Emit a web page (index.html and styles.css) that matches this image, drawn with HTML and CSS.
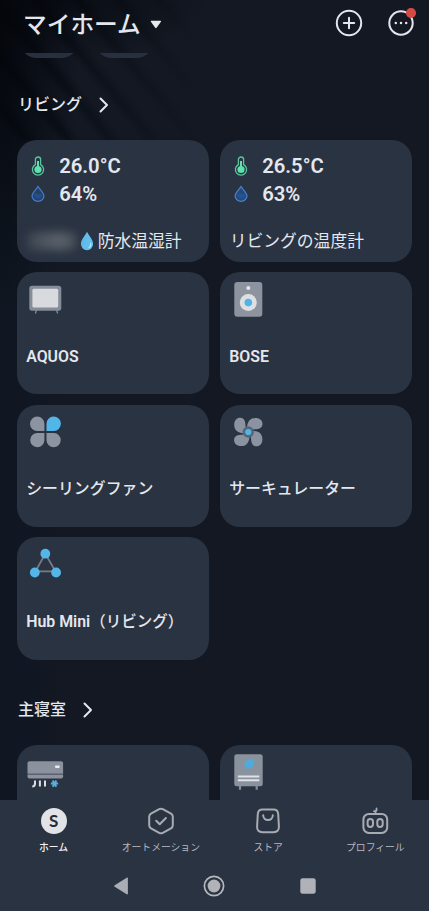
FILE: index.html
```html
<!DOCTYPE html>
<html lang="ja">
<head>
<meta charset="utf-8">
<meta name="viewport" content="width=device-width, initial-scale=1">
<title>マイホーム</title>
<link rel="stylesheet" href="styles.css">
</head>
<body>
<div class="app">
  <header class="header">
    <h1 class="title">マイホーム</h1>
    <svg class="caret" width="12" height="9" viewBox="0 0 12 9"><path d="M1.3.8h9.2q.8.1.4.9L6.6 7.8q-.7.8-1.4 0L.9 1.7Q.5.9 1.3.8z" fill="#e8eaee"/></svg>
    <div class="actions">
      <svg width="28" height="28" viewBox="0 0 28 28" fill="none" stroke="#e3e6ee" stroke-width="2" stroke-linecap="round"><circle cx="14" cy="14" r="12.2"/><path d="M14 8.8v10.4M8.8 14h10.4"/></svg>
      <div class="more">
        <svg width="28" height="28" viewBox="0 0 28 28"><circle cx="14" cy="14" r="11.7" fill="none" stroke="#e3e6ee" stroke-width="2"/><g fill="#e3e6ee"><circle cx="8.8" cy="14" r="1.25"/><circle cx="14" cy="14" r="1.25"/><circle cx="19.2" cy="14" r="1.25"/></g></svg>
        <span class="badge"></span>
      </div>
    </div>
  </header>

  <main class="content">
    <div class="chips"><span class="chip"></span><span class="chip"></span></div>

    <h2 class="section">リビング<svg width="10" height="16" viewBox="0 0 10 16"><path d="M1.5 1.5 8 8l-6.500 6.500"/></svg></h2>
    <div class="grid">
      <div class="card">
        <div class="reading">
          <svg width="14" height="20" viewBox="0 0 14 20"><path d="M4.400 8.600V3.600a2.600 2.600 0 0 1 5.200 0v5a5.600 5.600 0 1 1-5.200 0z" fill="none" stroke="#57c69d" stroke-width="1.300"/><circle cx="7" cy="13.500" r="3.600" fill="#5fe0ad"/><path d="M7 5v8" stroke="#5fe0ad" stroke-width="2"/></svg>
          <span>26.0°C</span>
        </div>
        <div class="reading">
          <svg width="14" height="18" viewBox="0 0 14 18"><path d="M7 1.500C5 4.800 1.100 7.800 1.100 11a5.900 5.400 0 0 0 11.800 0C12.900 7.800 9 4.800 7 1.500z" fill="#26405f" stroke="#4478d0" stroke-width="1.300"/><path d="M2.800 9.500q2-1.800 4-.6t4.500-.5a4.300 4.400 0 1 1-8.500 1.100z" fill="#235089"/></svg>
          <span>64%</span>
        </div>
        <div class="label sensor">
          <span class="masked"></span>
          <svg class="drop" width="14" height="20" viewBox="0 0 14 20"><path d="M7 .8C5 5 .9 8.700.9 13a6.100 6.200 0 0 0 12.200 0C13.100 8.700 9 5 7 .8z" fill="#62bfed"/><path d="M10.700 12.500q.6 2.500-1.500 4" fill="none" stroke="#bbe9fb" stroke-width="1.300" stroke-linecap="round"/></svg>
          <span>防水温湿計</span>
        </div>
      </div>
      <div class="card">
        <div class="reading">
          <svg width="14" height="20" viewBox="0 0 14 20"><path d="M4.400 8.600V3.600a2.600 2.600 0 0 1 5.200 0v5a5.600 5.600 0 1 1-5.200 0z" fill="none" stroke="#57c69d" stroke-width="1.300"/><circle cx="7" cy="13.500" r="3.600" fill="#5fe0ad"/><path d="M7 5v8" stroke="#5fe0ad" stroke-width="2"/></svg>
          <span>26.5°C</span>
        </div>
        <div class="reading">
          <svg width="14" height="18" viewBox="0 0 14 18"><path d="M7 1.500C5 4.800 1.100 7.800 1.100 11a5.900 5.400 0 0 0 11.800 0C12.900 7.800 9 4.800 7 1.500z" fill="#264a75" stroke="#4a7dc8" stroke-width="1.300"/><path d="M2.800 9q2-1.800 4-.6t4.500-.5a4.300 4.600 0 1 1-8.500 1.100z" fill="#205494"/></svg>
          <span>63%</span>
        </div>
        <div class="label sensor">リビングの温度計</div>
      </div>

      <div class="card">
        <svg class="device" viewBox="0 0 60 50"><path d="M19.500 38l-1 3M39.500 38l1 3" stroke="#858c98" stroke-width="1.300" stroke-linecap="round"/><rect x="12.300" y="13.800" width="32" height="25" rx="2.800" fill="#858d9a"/><rect x="15.400" y="16.800" width="25.800" height="18.600" rx="1.500" fill="#d8dadd"/></svg>
        <div class="label latin">AQUOS</div>
      </div>
      <div class="card">
        <svg class="device" viewBox="0 0 60 50"><rect x="14.300" y="10" width="28" height="34.700" rx="3" fill="#8d949f"/><circle cx="28.300" cy="16" r="2" fill="#e3e6ea"/><circle cx="28.300" cy="30.600" r="8.500" fill="#dedfe2"/><circle cx="28.300" cy="30.600" r="3.800" fill="#50b4e5"/></svg>
        <div class="label latin">BOSE</div>
      </div>

      <div class="card">
        <svg class="device" viewBox="0 0 60 50"><g fill="#8d94a1"><path d="M27.400 26h-7a7.200 7.200 0 1 1 7-7z"/><path d="M27.400 28v7.300a7.100 7.100 0 1 1-7-7.300z"/><path d="M29.500 28h7.400a7.100 7.100 0 1 1-7.400 7.300z"/></g><path d="M29.500 26v-7a7.200 7.200 0 1 1 7.400 7z" fill="#52b6e9"/></svg>
        <div class="label">シーリングファン</div>
      </div>
      <div class="card">
        <svg class="device" viewBox="0 0 60 50"><g fill="#8b92a0"><path id="blade" d="M27 26C26.500 16.500 30 12.900 35.500 12.900c4.500 0 7.200 2.700 7 6.300-.2 3.900-4 5-7.500 5-3 0-4.500 1.500-6 3z"/><use href="#blade" transform="rotate(90 28.300 27)"/><use href="#blade" transform="rotate(180 28.300 27)"/><use href="#blade" transform="rotate(270 28.300 27)"/></g><circle cx="28.300" cy="27" r="5.700" fill="#53667d"/><circle cx="28.300" cy="27" r="3.100" fill="#52b6e0"/></svg>
        <div class="label">サーキュレーター</div>
      </div>

      <div class="card">
        <svg class="device" viewBox="0 0 60 50"><path d="M28.300 16.700 18.500 34.300h20z" fill="none" stroke="#747c88" stroke-width="1.800"/><g fill="#54b5e8"><circle cx="28.300" cy="16.700" r="4.900"/><circle cx="17.800" cy="35.500" r="4.900"/><circle cx="39.100" cy="35.500" r="4.900"/></g></svg>
        <div class="label latin">Hub Mini<span class="room">（リビング）</span></div>
      </div>
    </div>

    <h2 class="section second">主寝室<svg width="10" height="16" viewBox="0 0 10 16"><path d="M1.500 1.500 8 8l-6.500 6.500"/></svg></h2>
    <div class="grid">
      <div class="card">
        <svg class="device" viewBox="0 0 60 50"><path d="M12.500 16.300h31.600q2 0 2 2v10.400H10.500V18.300q0-2 2-2z" fill="#8b929e"/><path d="M10.500 29.600h35.600v1.800q0 2-2 2H12.500q-2 0-2-2z" fill="#8b929e"/><rect x="38" y="20.500" width="4.700" height="2.400" rx=".8" fill="#e9ebee"/><path d="M18 35.500v3q0 3-2.700 3M22.900 35.500v6M28 35.500v6" fill="none" stroke="#dce0e6" stroke-width="2"/><path d="M35.700 35.500l3.600 6.200M39.300 35.500l-3.600 6.200M33.900 38.600h7.200" stroke="#52b0e2" stroke-width="2"/></svg>
      </div>
      <div class="card">
        <svg class="device" viewBox="0 0 60 50"><path d="M20 40v4.800M36.700 40v4.800" stroke="#858d99" stroke-width="2.200"/><rect x="14.300" y="9.300" width="28.400" height="32" rx="2.500" fill="#8a929e"/><path d="M33.800 13.500c.5 4 .2 9-4.300 10-2.300.4-4-.3-4.600-.8-1.900-4.900 1.300-8.400 8.900-9.200z" fill="#4bace0"/><path d="m25 23.500 5-5.500" stroke="#6b9dbd" stroke-width=".8"/><path d="M17.800 31.600h21.500M17.800 35.300h21.500" stroke="#dfe2e6" stroke-width="2"/></svg>
      </div>
    </div>
  </main>

  <footer class="footer">
    <nav class="tabs">
      <div class="tab active">
        <div class="home">S</div>
        <span>ホーム</span>
      </div>
      <div class="tab">
        <svg viewBox="0 0 28 28"><path d="M12.200 2.200q1.800-1 3.600 0l8.200 4.500q1.800 1 1.800 3v8.600q0 2-1.800 3l-8.200 4.500q-1.800 1-3.600 0L4 21.300q-1.800-1-1.800-3V9.700q0-2 1.800-3z"/><path d="m9.200 13.800 3.500 3.500 6.200-6.300"/></svg>
        <span>オートメーション</span>
      </div>
      <div class="tab">
        <svg viewBox="0 0 28 28"><path d="M8.500 2.500h11q4.300 0 4.700 4.300l.7 12.700q.2 5.700-5.400 5.700h-11q-5.600 0-5.400-5.700l.7-12.700q.4-4.300 4.700-4.300z"/><path d="M9.200 8.300a4.800 4.800 0 0 0 9.600 0"/></svg>
        <span>ストア</span>
      </div>
      <div class="tab">
        <svg viewBox="0 0 28 28"><rect x="2.400" y="6.900" width="23.800" height="19" rx="5.500"/><rect x="6.600" y="12" width="5.400" height="8" rx="2.700"/><rect x="16.300" y="12" width="5.400" height="8" rx="2.700"/><path d="M14.500 6V4.200H13M15.500 3.500V1.500" stroke-width="1.800"/></svg>
        <span>プロフィール</span>
      </div>
    </nav>
    <div class="system">
      <svg width="14" height="18" viewBox="0 0 14 18"><path d="M12.700.7q1.200-.5 1.200.8v15q0 1.300-1.200.8L.7 9.800Q-.4 9 .7 8.200z" fill="#aaadb3"/></svg>
      <svg width="22" height="22" viewBox="0 0 22 22"><circle cx="11" cy="11" r="9.600" fill="none" stroke="#b5b8bd" stroke-width="1.700"/><circle cx="11" cy="11" r="6.400" fill="#b0b3b8"/></svg>
      <svg width="16" height="16" viewBox="0 0 16 16"><rect x=".3" y=".3" width="15.400" height="15.400" rx="2.300" fill="#b0b2b8"/></svg>
    </div>
  </footer>
</div>
</body>
</html>
```
FILE: styles.css
```css
* { box-sizing: border-box; }

body {
  margin: 0;
  background: #141822;
  color: #e4e7ed;
  font-family: Roboto, "Noto Sans CJK JP", sans-serif;
}

svg { display: block; flex: none; }

.app {
  height: 911px;
  display: flex;
  flex-direction: column;
  overflow: hidden;
  background:
    radial-gradient(ellipse 80px 280px at 0 40px, rgba(2, 4, 8, .85), rgba(2, 4, 8, 0)),
    radial-gradient(ellipse 150px 60px at 60px 0, rgba(2, 4, 8, .6), rgba(2, 4, 8, 0)),
    linear-gradient(90deg, rgba(19, 24, 35, 0) 60px, #131823 210px) 0 0 / 300px 140px no-repeat,
    repeating-linear-gradient(50deg, rgba(3, 6, 12, 0) 0 12px, rgba(3, 6, 12, .5) 21px, rgba(3, 6, 12, 0) 32px) 0 0 / 299px 140px no-repeat,
    linear-gradient(90deg, #101722 0, #131823 70px, #141822 100%);
}

.header {
  flex: none;
  height: 52.500px;
  display: flex;
  align-items: flex-start;
  padding: 9px 14px 0 23px;
}

.title {
  margin: -1px 0 0;
  font-size: 23.700px;
  line-height: 34px;
  font-weight: 500;
}

.caret { margin: 11px 0 0 9px; }

.actions {
  margin-left: auto;
  display: flex;
  gap: 24px;
}

.more { position: relative; }

.badge {
  position: absolute;
  top: -1px;
  right: -.5px;
  width: 9.500px;
  height: 9.500px;
  border-radius: 50%;
  background: #d54a43;
}

.content {
  flex: 1;
  min-height: 0;
  overflow: hidden;
}

.chips {
  display: flex;
  gap: 15px;
  height: 6px;
  padding-left: 19px;
}

.chip {
  width: 60px;
  height: 36px;
  margin-top: -30.500px;
  border-radius: 18px;
  background: #282f3e;
}

.section {
  margin: 34.500px 0 0 18px;
  height: 24px;
  display: flex;
  align-items: center;
  gap: 17px;
  font-size: 16px;
  line-height: 24px;
  font-weight: 500;
}

.section svg {
  fill: none;
  stroke: #e4e7ed;
  stroke-width: 2;
  stroke-linecap: round;
  stroke-linejoin: round;
}

.section.second { margin-top: 38.500px; }

.grid {
  display: grid;
  grid-template-columns: 192.500px 192.500px;
  grid-auto-rows: 122.300px;
  gap: 10.300px 10.500px;
  margin: 22.600px 0 0 16.700px;
}

.card {
  border-radius: 20px;
  background: #2a3342;
  overflow: hidden;
}

.device { width: 60px; height: 50px; }

.label {
  padding: 22px 0 0 9.500px;
  font-size: 15.900px;
  line-height: 24px;
  font-weight: 500;
  white-space: nowrap;
}

.label.latin { padding-top: 23px; font-size: 15.900px; font-weight: 600; }

.room { font-size: 15.500px; font-weight: 500; }

.reading {
  height: 28.300px;
  display: flex;
  align-items: center;
  padding-left: 14.500px;
  gap: 14px;
  font-size: 20.300px;
  font-weight: 600;
}

.reading:first-child { margin-top: 12px; }

.label.sensor {
  display: flex;
  align-items: center;
  padding: 0 0 0 10px;
  margin-top: 21px;
  font-size: 16.800px;
  font-weight: 400;
}

.masked {
  width: 50px;
  height: 18px;
  border-radius: 7px;
  background: linear-gradient(90deg, #3b434f, #4b535e 30%, #5a616a 65%, #434b57);
  filter: blur(4px);
}

.drop { margin: -1px 4px 0 3px; }

.footer {
  flex: none;
  height: 111.300px;
  background: #2a3342;
}

.tabs {
  display: grid;
  grid-template-columns: repeat(4, 1fr);
  padding-top: 7.500px;
}

.tab {
  display: flex;
  flex-direction: column;
  align-items: center;
  font-size: 9.800px;
  line-height: 14px;
  color: #b4b8c0;
  white-space: nowrap;
}

.tab svg {
  width: 28px;
  height: 28px;
  fill: none;
  stroke: #a8abb2;
  stroke-width: 2;
  stroke-linecap: round;
  stroke-linejoin: round;
}

.tab span { margin-top: 5.500px; }

.tab.active { color: #f0f2f5; font-weight: 500; }

.home {
  width: 26px;
  height: 26px;
  margin: 1px;
  border-radius: 50%;
  background: #e1e3e6;
  color: #232c3a;
  font: 700 17px/26px Lato, sans-serif;
  text-align: center;
}

.system {
  display: flex;
  align-items: center;
  justify-content: space-between;
  height: 22px;
  margin-top: 20px;
  padding: 0 113px 0 114px;
}
```
